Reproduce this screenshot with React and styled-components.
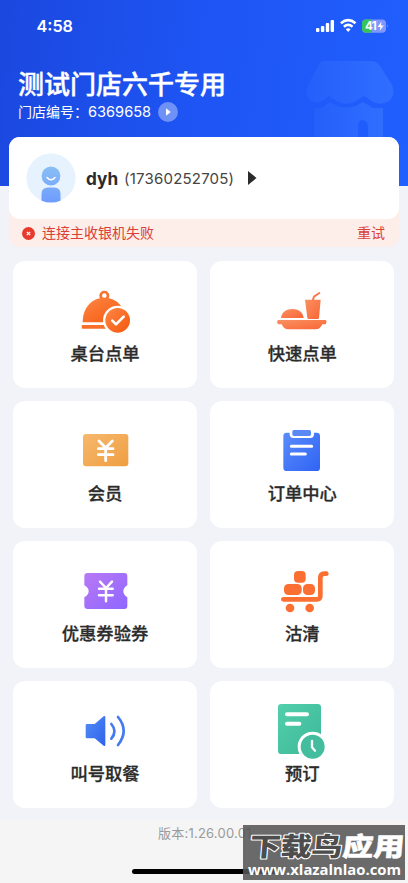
import React from 'react';
import styled, { createGlobalStyle } from 'styled-components';

const GlobalStyle = createGlobalStyle`
    * {
        box-sizing: border-box;
    }

    body {
        margin: 0;
        background-color: #f3f4f8;
        font-family: Inter, "Noto Sans CJK SC", sans-serif;
    }
`

const Page = styled.div`
    position: relative;
    width: 408px;
    height: 883px;
    overflow: hidden;
    background: linear-gradient(#f2f3f8 0, #f2f3f8 819px, #f5f5f5 820px);
`

const Header = styled.header`
    position: relative;
    height: 186px;
    color: white;
    background: linear-gradient(97deg, #1b48df 0%, #1e55f4 50%, #215fff 100%);
`

const StatusBar = styled.div`
    display: flex;
    align-items: center;
    height: 52px;
    padding-left: 36.5px;
    padding-right: 20px;
`

const Time = styled.div`
    flex: 1;
    font-size: 16.2px;
    font-weight: 600;
`

const StatusIcons = styled.svg`
    display: block;
    width: 74px;
    height: 16px;
`

const StoreArt = styled.svg`
    position: absolute;
    top: 56px;
    right: 0;
    width: 108px;
    height: 84px;
`

const StoreName = styled.h1`
    margin: 0;
    padding-top: 14px;
    padding-left: 18px;
    font-size: 26px;
    line-height: 38px;
    font-weight: 500;
    -webkit-text-stroke: 0.4px white;
`

const StoreNumber = styled.div`
    display: flex;
    align-items: center;
    height: 20px;
    margin-top: -2px;
    padding-left: 18px;
    font-size: 14px;
    white-space: pre;
`

const NumberLabel = styled.span`
    padding-bottom: 2px;
`

const Digits = styled.span`
    font-size: 14.6px;
`

const PlayIcon = styled.svg`
    width: 20px;
    height: 20px;
    margin-left: 7px;
`

const Account = styled.section`
    position: relative;
    margin: -49px 9px 0;
    height: 110px;
    border-radius: 11px;
    background-color: #feeeea;
`

const UserCard = styled.div`
    display: flex;
    align-items: center;
    height: 82px;
    padding-left: 17px;
    border-radius: 11px;
    background-color: white;
    color: #2b2b2b;
`

const Avatar = styled.svg`
    width: 50px;
    height: 50px;
`

const UserName = styled.b`
    margin-left: 10px;
    font-size: 17.2px;
    font-weight: 700;
`

const Phone = styled.span`
    margin-left: 6px;
    font-size: 15px;
    letter-spacing: 0.2px;
    color: #444;
`

const Arrow = styled.svg`
    width: 10px;
    height: 16px;
    margin-left: 13px;
`

const ErrorRow = styled.div`
    display: flex;
    align-items: center;
    height: 28px;
    padding-left: 13px;
    padding-right: 14px;
    font-size: 14px;
    color: #d94036;
`

const ErrorIcon = styled.svg`
    width: 13px;
    height: 13px;
    margin-right: 7px;
`

const ErrorText = styled.span`
    flex: 1;
    padding-bottom: 2px;
`

const Retry = styled.span`
    padding-bottom: 2px;
`

const Grid = styled.main`
    display: grid;
    grid-template-columns: 184px 184px;
    grid-auto-rows: 127px;
    gap: 13.3px;
    padding: 13.5px 13px 0;
`

const Tile = styled.div`
    display: flex;
    flex-direction: column;
    align-items: center;
    padding-top: 19px;
    border-radius: 12px;
    background-color: white;
`

const TileIcon = styled.svg`
    width: 90px;
    height: 60px;
`

const TileLabel = styled.div`
    margin-top: 1px;
    font-size: 17.3px;
    line-height: 26px;
    font-weight: 500;
    color: #2b2b2b;
    -webkit-text-stroke: 0.3px #2b2b2b;
`

const Version = styled.div`
    padding-top: 15px;
    padding-left: 158px;
    font-size: 13px;
    line-height: 20px;
    letter-spacing: 0.22px;
    color: #9a9a9a;
`

const HomeBar = styled.div`
    width: 144px;
    height: 5px;
    margin: 26px auto 0;
    border-radius: 3px;
    background-color: black;
`

const Watermark = styled.div`
    position: absolute;
    top: 825px;
    left: 243px;
    width: 162px;
    height: 55px;
    background-color: rgba(85, 85, 85, 0.87);
`

const WatermarkText = styled.svg`
    display: block;
    width: 162px;
    height: 55px;
`

// Shared two-stop diagonal fill for the tile icons
const Fill = ({ id, from, to }) => (
    <defs>
        <linearGradient id={id} x1="0" y1="0" x2="1" y2="1">
            <stop offset="0" stopColor={from} />
            <stop offset="1" stopColor={to} />
        </linearGradient>
    </defs>
)

const TableIcon = () => (
    <TileIcon viewBox="0 0 270 180">
        <Fill id="table" from="#ff8744" to="#f3570e" />
        <circle cx="133" cy="47" r="11" fill="none" stroke="#f47532" strokeWidth="8" />
        <path d="M68 127C68 82 96 53 133 53S198 82 198 127Z" fill="url(#table)" />
        <rect x="65" y="135" width="90" height="11" rx="3" fill="#f8702c" />
        <circle cx="173" cy="121" r="44" fill="white" />
        <circle cx="173" cy="121" r="37" fill="url(#table)" />
        <path d="M157 122L168 133L191 110" fill="none" stroke="white" strokeWidth="8" strokeLinecap="round" strokeLinejoin="round" />
    </TileIcon>
)

const FastIcon = () => (
    <TileIcon viewBox="-6 0 270 180">
        <Fill id="fast" from="#f99164" to="#fa6534" />
        <path d="M66 114C68 96 82 87 100 87S132 96 134 114Z" fill="url(#fast)" />
        <path d="M138 59H185L180 114Q180 117 176 117H149Q145 117 145 114Z" fill="url(#fast)" />
        <path d="M162 59L165 50L181 39" fill="none" stroke="#f77b4c" strokeWidth="6" strokeLinecap="round" strokeLinejoin="round" />
        <path d="M57 120H201Q205 126 200 133H190Q184 148 170 148H88Q74 148 68 133H58Q51 126 57 120Z" fill="url(#fast)" />
    </TileIcon>
)

const MemberIcon = () => (
    <TileIcon viewBox="0 0 270 180">
        <Fill id="member" from="#f6b86c" to="#ef9e42" />
        <rect x="69" y="42" width="136" height="97" rx="9" fill="url(#member)" />
        <path d="M117 63L137 83L157 63M137 83V122M115 86H159M115 104H159" fill="none" stroke="white" strokeWidth="8.5" strokeLinecap="round" strokeLinejoin="round" />
    </TileIcon>
)

const OrderIcon = () => (
    <TileIcon viewBox="-6 0 270 180">
        <Fill id="order" from="#5a8cfb" to="#3064f4" />
        <rect x="73" y="38" width="110" height="115" rx="10" fill="url(#order)" />
        <path d="M92 32H165V43Q165 54 154 54H103Q92 54 92 43Z" fill="white" />
        <rect x="100" y="30" width="56" height="18" rx="5" fill="#5989f5" />
        <path d="M97 79H158M97 102H139" stroke="white" strokeWidth="9" strokeLinecap="round" />
    </TileIcon>
)

const CouponIcon = () => (
    <TileIcon viewBox="15 0 270 180">
        <Fill id="coupon" from="#b879f4" to="#8e66ff" />
        <path d="M98 39H208Q217 39 217 48V76Q205 83 205 94T217 112V138Q217 147 208 147H98Q88 147 88 138V112Q101 105 101 94T88 76V48Q88 39 98 39Z" fill="url(#coupon)" />
        <path d="M135 65L153 84L171 65M153 84V124M132 86H173M132 106H173" fill="none" stroke="white" strokeWidth="7.5" strokeLinecap="round" strokeLinejoin="round" />
    </TileIcon>
)

const StockIcon = () => (
    <TileIcon viewBox="-6 0 270 180">
        <g fill="#fb7032">
            <rect x="105" y="33" width="35" height="35" rx="12" />
            <rect x="75" y="72" width="53" height="33" rx="13" />
            <rect x="132" y="72" width="36" height="33" rx="13" />
            <circle cx="93" cy="144" r="13" />
            <circle cx="152" cy="144" r="13" />
        </g>
        <path d="M73 118H174Q184 118 184 108V54Q184 41 196 41H202" fill="none" stroke="#fb7032" strokeWidth="14" strokeLinecap="round" />
    </TileIcon>
)

const CallIcon = () => (
    <TileIcon viewBox="0 0 270 180">
        <Fill id="call" from="#548cf6" to="#2d63eb" />
        <path d="M81 72H104L131 49Q136 46 136 52V134Q136 140 131 137L104 115H81Q77 115 77 111V76Q77 72 81 72Z" fill="url(#call)" />
        <path d="M154 72Q173 94 154 116M174 51Q208 92 174 135" fill="none" stroke="#457bef" strokeWidth="8" strokeLinecap="round" />
    </TileIcon>
)

const BookIcon = () => (
    <TileIcon viewBox="384 15 270 180">
        <Fill id="book" from="#52cfad" to="#3db898" />
        <rect x="447" y="27" width="129" height="150" rx="10" fill="url(#book)" />
        <path d="M474 58H534M474 86H511" stroke="white" strokeWidth="12" strokeLinecap="round" />
        <circle cx="551" cy="155" r="45" fill="white" />
        <circle cx="551" cy="155" r="36" fill="#43bd9d" />
        <path d="M549 138V157L558 167" fill="none" stroke="white" strokeWidth="7" strokeLinecap="round" strokeLinejoin="round" />
    </TileIcon>
)

const tiles = [
    { label: '桌台点单', Icon: TableIcon },
    { label: '快速点单', Icon: FastIcon },
    { label: '会员', Icon: MemberIcon },
    { label: '订单中心', Icon: OrderIcon },
    { label: '优惠券验券', Icon: CouponIcon },
    { label: '沽清', Icon: StockIcon },
    { label: '叫号取餐', Icon: CallIcon },
    { label: '预订', Icon: BookIcon },
]

const Status = () => (
    <StatusBar>
        <Time>4:58</Time>
        <StatusIcons viewBox="0 0 74 16">
            <g fill="white">
                <rect x="2" y="10" width="3.4" height="4" rx="1" />
                <rect x="6.9" y="8" width="3.4" height="6" rx="1" />
                <rect x="11.8" y="5" width="3.4" height="9" rx="1" />
                <rect x="16.6" y="2" width="3.4" height="12" rx="1" />
            </g>
            <path d="M26.9 5.3Q34.2 -0.9 41.5 5.3M29.9 8.7Q34.2 5.1 38.5 8.7" fill="none" stroke="white" strokeWidth="2.6" />
            <path d="M31.8 11.3Q34.2 9.4 36.6 11.3L34.2 14Z" fill="white" />
            <rect x="48" y="1.5" width="24" height="13.2" rx="4" fill="#8098fb" />
            <path d="M52 1.5H58V14.7H52Q48 14.7 48 10.7V5.5Q48 1.5 52 1.5Z" fill="#36c35c" />
            <text x="51" y="12.3" fill="white" fontSize="11.5" fontWeight="700" letterSpacing="-0.5">41</text>
            <path d="M67.6 3.5L63.6 8.9H66.4L65.8 12.7L69.7 7.4H66.9Z" fill="white" />
            <path d="M73 6.2Q74.5 8 73 10Z" fill="#8098fb" />
        </StatusIcons>
    </StatusBar>
)

const App = () => (
    <Page>
        <GlobalStyle />
        <Header>
            <StoreArt viewBox="0 0 108 84">
                <defs>
                    <linearGradient id="store" x1="0" x2="1">
                        <stop offset="0" stopColor="#255ffa" />
                        <stop offset="1" stopColor="#306eff" />
                    </linearGradient>
                </defs>
                <path d="M24 5H71Q77 5 80 10L92 29Q96 39 89 45Q82 50 73 46L64 40L56 45Q47 50 38 46L29 40L22 45Q13 49 8 42Q4 36 8 29L18 10Q20 5 24 5Z" fill="url(#store)" />
                <path d="M14 52H22L30 46Q46 57 63 46L73 52H83V84H68V70Q67 64 62.5 64Q58 64 58 70V84H14Z" fill="url(#store)" />
            </StoreArt>
            <Status />
            <StoreName>测试门店六千专用</StoreName>
            <StoreNumber>
                <NumberLabel>门店编号：</NumberLabel>
                <Digits>6369658</Digits>
                <PlayIcon viewBox="0 0 20 20">
                    <circle cx="10" cy="10" r="10" fill="#6e91f8" />
                    <path d="M8 6.2L12.8 10L8 13.8Z" fill="white" />
                </PlayIcon>
            </StoreNumber>
        </Header>
        <Account>
            <UserCard>
                <Avatar viewBox="0 0 50 50">
                    <defs>
                        <clipPath id="avatarClip"><circle cx="25" cy="25" r="24.5" /></clipPath>
                        <linearGradient id="avatarFill" x1="0" y1="12" x2="0" y2="49" gradientUnits="userSpaceOnUse">
                            <stop offset="0" stopColor="#8bc0f4" />
                            <stop offset="1" stopColor="#6e9dff" />
                        </linearGradient>
                    </defs>
                    <circle cx="25" cy="25" r="24.5" fill="#e6f2fe" />
                    <g clipPath="url(#avatarClip)" fill="url(#avatarFill)">
                        <circle cx="25" cy="23" r="9.4" />
                        <path d="M15.5 50V41Q15.5 34.5 22 34.5H28Q34.5 34.5 34.5 41V50Z" />
                    </g>
                    <path d="M21 24.5Q25 29 29 24.5" fill="none" stroke="white" strokeWidth="1.5" strokeLinecap="round" />
                </Avatar>
                <UserName>dyh</UserName>
                <Phone>(17360252705)</Phone>
                <Arrow viewBox="0 0 10 16">
                    <path d="M1 1L9.5 8L1 15Z" fill="#2b2b2b" />
                </Arrow>
            </UserCard>
            <ErrorRow>
                <ErrorIcon viewBox="0 0 13 13">
                    <circle cx="6.5" cy="6.5" r="6.5" fill="#e73a2c" />
                    <path d="M4.8 4.8L8.2 8.2M8.2 4.8L4.8 8.2" stroke="white" strokeWidth="1.2" />
                </ErrorIcon>
                <ErrorText>连接主收银机失败</ErrorText>
                <Retry>重试</Retry>
            </ErrorRow>
        </Account>
        <Grid>
            {tiles.map(({ label, Icon }) => (
                <Tile key={label}>
                    <Icon />
                    <TileLabel>{label}</TileLabel>
                </Tile>
            ))}
        </Grid>
        <Version>版本:1.26.00.01</Version>
        <HomeBar />
        <Watermark>
            <WatermarkText viewBox="0 0 162 55">
                <g transform="translate(6 31) skewX(-5) scale(1.19 1)" fontFamily="Noto Sans CJK SC" fontSize="26" fontWeight="900" strokeLinejoin="round" paintOrder="stroke">
                    <text x="0" y="0" fill="#4d4d4d" stroke="white" strokeWidth="2">下载鸟</text>
                    <text x="78" y="0" fill="white" stroke="white" strokeWidth="0.5">应用</text>
                </g>
                <text x="5" y="50" textLength="153" lengthAdjust="spacingAndGlyphs" fontFamily="Open Sans" fontSize="14.5" fontWeight="700" fill="white">www.xlazalnlao.com</text>
            </WatermarkText>
        </Watermark>
    </Page>
)

export default App;
